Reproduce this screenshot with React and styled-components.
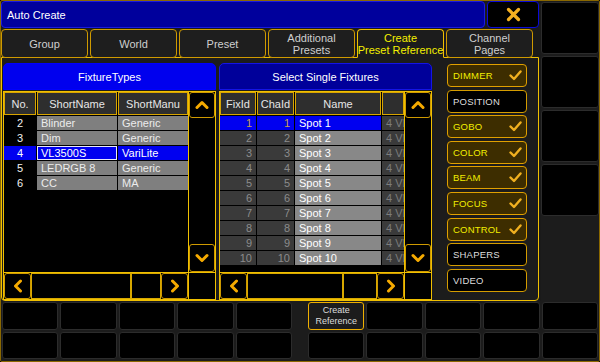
import styled, { createGlobalStyle } from "styled-components";

const YELLOW = "#f0c000";
const GOLD = "#cf9a00";
const ARROW = "#f5aa00";

const GlobalStyle = createGlobalStyle`
  html, body { margin: 0; padding: 0; background: #000; }
  body { font-family: "Liberation Sans", Arial, sans-serif; }
  * { box-sizing: border-box; }
`;

const tabs = [
  { label: "Group" },
  { label: "World" },
  { label: "Preset" },
  { label: "Additional\nPresets" },
  { label: "Create\nPreset Reference", active: true },
  { label: "Channel\nPages" },
];

const fixtureTypes = [
  ["2", "Blinder", "Generic"],
  ["3", "Dim", "Generic"],
  ["4", "VL3500S", "VariLite", true],
  ["5", "LEDRGB 8", "Generic"],
  ["6", "CC", "MA"],
];

const spots = Array.from({ length: 10 }, (_, i) => [String(i + 1), `Spot ${i + 1}`, i === 0]);

const features = [
  ["DIMMER", true],
  ["POSITION", false],
  ["GOBO", true],
  ["COLOR", true],
  ["BEAM", true],
  ["FOCUS", true],
  ["CONTROL", true],
  ["SHAPERS", false],
  ["VIDEO", false],
];

// cell looks per kind
const tones = {
  number: { bg: "#000", fg: "#f2f2f2", align: "center" },
  gray: { bg: "#7f7f7f", fg: "#ececec", align: "left" },
  id: { bg: "#3a3a3a", fg: "#8c8c8c", align: "right" },
  name: { bg: "#888", fg: "#fff", align: "left" },
  extra: { bg: "#3a3a3a", fg: "#7c7c7c", align: "left" },
  selected: { bg: "#0000f0", fg: "#fff", align: "left" },
  selectedNumber: { bg: "#0000f0", fg: "#fff", align: "center" },
  selectedId: { bg: "#0000f0", fg: "#c9a24a", align: "right" },
};

const Chevron = ({ dir }) => {
  const paths = {
    up: "M2 7.5L7 2.5L12 7.5",
    down: "M2 2.5L7 7.5L12 2.5",
    left: "M7.5 2L2.5 7L7.5 12",
    right: "M2.5 2L7.5 7L2.5 12",
  };
  const wide = dir === "up" || dir === "down";
  return (
    <svg width={wide ? 14 : 10} height={wide ? 10 : 14} viewBox={wide ? "0 0 14 10" : "0 0 10 14"}>
      <path d={paths[dir]} stroke={ARROW} strokeWidth="3" fill="none" strokeLinecap="round" strokeLinejoin="round" />
    </svg>
  );
};

const CloseIcon = () => (
  <svg width="15" height="15" viewBox="0 0 15 15">
    <path d="M2.5 2.5L12.5 12.5M12.5 2.5L2.5 12.5" stroke="#f5b020" strokeWidth="3.2" strokeLinecap="round" />
  </svg>
);

const Check = () => (
  <svg width="13" height="11" viewBox="0 0 13 11">
    <path d="M1.5 5.5L5 9L11.5 1.5" stroke="#f0b020" strokeWidth="2.4" fill="none" strokeLinecap="round" strokeLinejoin="round" />
  </svg>
);

const DataTable = ({ title, titleBg, titleBorder, columns, heads, rows, track }) => (
  <Table>
    <TableTitle $bg={titleBg} $border={titleBorder}>{title}</TableTitle>
    <TableBody>
      <DataArea>
        <HeaderRow $cols={columns}>
          {heads.map((h, i) => (
            <HeadCell key={i}>{h}</HeadCell>
          ))}
        </HeaderRow>
        {rows.map((cells, r) => (
          <Row key={r} $cols={columns}>
            {cells.map((c, i) => (
              <Cell key={i} $tone={tones[c.tone]} $edit={c.edit}>
                {c.text}
              </Cell>
            ))}
          </Row>
        ))}
      </DataArea>
      <VScroll>
        <ScrollButton $h={26}>
          <Chevron dir="up" />
        </ScrollButton>
        <Track />
        <ScrollButton $h={28}>
          <Chevron dir="down" />
        </ScrollButton>
      </VScroll>
      <HScroll>
        <ScrollButton $w={27}>
          <Chevron dir="left" />
        </ScrollButton>
        <HSeg $grow />
        <HSeg style={{ width: track }} />
        <ScrollButton $w={27}>
          <Chevron dir="right" />
        </ScrollButton>
      </HScroll>
      <Corner />
    </TableBody>
  </Table>
);

export default function App() {
  const leftRows = fixtureTypes.map(([no, name, manu, sel]) => [
    { text: no, tone: sel ? "selectedNumber" : "number" },
    { text: name, tone: sel ? "selected" : "gray", edit: sel },
    { text: manu, tone: sel ? "selected" : "gray" },
  ]);
  const rightRows = spots.map(([id, name, sel]) => [
    { text: id, tone: sel ? "selectedId" : "id" },
    { text: id, tone: sel ? "selectedId" : "id" },
    { text: name, tone: sel ? "selected" : "name" },
    { text: "4 VL3500S", tone: "extra" },
  ]);

  return (
    <>
      <GlobalStyle />
      <Window>
        <Top>
          <Main>
            <TitleRow>
              <TitleBar>Auto Create</TitleBar>
              <CloseButton>
                <CloseIcon />
              </CloseButton>
            </TitleRow>
            <TabRow>
              {tabs.map((t) => (
                <Tab key={t.label} $active={t.active}>
                  {t.label}
                </Tab>
              ))}
            </TabRow>
            <Panel>
              <DataTable
                title="FixtureTypes"
                titleBg="#0000ee"
                titleBorder="#0000ff"
                columns="32px 80px 70px"
                heads={["No.", "ShortName", "ShortManu"]}
                rows={leftRows}
                track={30}
              />
              <DataTable
                title="Select Single Fixtures"
                titleBg="#00009a"
                titleBorder="#1414e6"
                columns="36px 37px 86px 22px"
                heads={["FixId", "ChaId", "Name", ""]}
                rows={rightRows}
                track={34}
              />
              <Features>
                {features.map(([label, on]) => (
                  <FeatureButton key={label} $on={on}>
                    {label}
                    {on && <Check />}
                  </FeatureButton>
                ))}
              </Features>
            </Panel>
          </Main>
          <SideColumn>
            {[0, 1, 2, 3].map((i) => (
              <SideCell key={i} />
            ))}
          </SideColumn>
        </Top>
        <BottomBar>
          <KeyGrid>
            {Array.from({ length: 10 }, (_, i) => (
              <Key key={i} />
            ))}
          </KeyGrid>
          <KeyGrid>
            <ActionKey>
              Create
              <br />
              Reference
            </ActionKey>
            {Array.from({ length: 9 }, (_, i) => (
              <Key key={i} />
            ))}
          </KeyGrid>
        </BottomBar>
      </Window>
    </>
  );
}

const Window = styled.div`
  width: 600px;
  height: 362px;
  border: 1px solid #8a6800;
  border-radius: 2px;
  background: #1a1a1a;
  display: flex;
  flex-direction: column;
  overflow: hidden;
`;

const Top = styled.div`
  display: flex;
  height: 300px;
`;

const Main = styled.div`
  width: 538px;
  display: flex;
  flex-direction: column;
`;

const TitleRow = styled.div`
  display: flex;
  gap: 2px;
  height: 27px;
`;

const TitleBar = styled.div`
  flex: 1;
  background: #00009c;
  border: 1px solid #1a1ae0;
  border-radius: 4px;
  color: #fff;
  font-size: 11px;
  padding-left: 5px;
  display: flex;
  align-items: center;
`;

const CloseButton = styled.div`
  width: 52px;
  background: #000;
  border: 1px solid #0a0ad8;
  border-radius: 4px;
  display: flex;
  align-items: center;
  justify-content: center;
`;

const TabRow = styled.div`
  display: flex;
  gap: 2px;
  height: 30px;
  padding-top: 1px;
  margin-bottom: -1px;
  position: relative;
  z-index: 1;
`;

const Tab = styled.div`
  width: 87px;
  border: 1px solid ${(p) => (p.$active ? YELLOW : GOLD)};
  border-bottom-color: ${(p) => (p.$active ? "#1c1c1c" : GOLD)};
  border-radius: ${(p) => (p.$active ? "4px 4px 0 0" : "4px")};
  background: ${(p) => (p.$active ? "#1c1c1c" : "#1e1e1e")};
  color: ${(p) => (p.$active ? "#f4f000" : "#cfcfcf")};
  font-size: 11px;
  line-height: 12px;
  white-space: pre;
  text-align: center;
  display: flex;
  align-items: center;
  justify-content: center;
  padding-top: 1px;
`;

const Panel = styled.div`
  flex: 1;
  display: flex;
  align-items: stretch;
  border: 1px solid ${YELLOW};
  border-radius: 0 0 4px 4px;
  background: #1c1c1c;
  padding: 5px 0 0 1px;
  gap: 3px;
`;

const Table = styled.div`
  width: 213px;
  display: flex;
  flex-direction: column;
  gap: 1px;
`;

const TableTitle = styled.div`
  height: 27px;
  flex-shrink: 0;
  background: ${(p) => p.$bg};
  border: 1px solid ${(p) => p.$border};
  border-radius: 5px 5px 0 0;
  color: #fff;
  font-size: 11px;
  display: flex;
  align-items: center;
  justify-content: center;
`;

const TableBody = styled.div`
  height: 209px;
  border: 1px solid ${YELLOW};
  background: #000;
  display: grid;
  grid-template-columns: 1fr 27px;
  grid-template-rows: 1fr 27px;
`;

const DataArea = styled.div`
  overflow: hidden;
  display: flex;
  flex-direction: column;
  gap: 1px;
`;

const HeaderRow = styled.div`
  display: grid;
  grid-template-columns: ${(p) => p.$cols};
  column-gap: 1px;
  height: 23px;
  flex-shrink: 0;
`;

const HeadCell = styled.div`
  background: #2e2e2e;
  border: 1px solid #d8a400;
  color: #e6e6e6;
  font-size: 11px;
  display: flex;
  align-items: center;
  justify-content: center;
  white-space: nowrap;
  overflow: hidden;
`;

const Row = styled.div`
  display: grid;
  grid-template-columns: ${(p) => p.$cols};
  column-gap: 1px;
  height: 14px;
  flex-shrink: 0;
`;

const Cell = styled.div`
  background: ${(p) => p.$tone.bg};
  color: ${(p) => p.$tone.fg};
  text-align: ${(p) => p.$tone.align};
  box-shadow: ${(p) => (p.$edit ? "inset 0 0 0 1px #e8e8ff" : "none")};
  font-size: 11px;
  line-height: 14px;
  padding: 0 4px;
  white-space: nowrap;
  overflow: hidden;
`;

const VScroll = styled.div`
  display: flex;
  flex-direction: column;
  border-left: 1px solid ${YELLOW};
  background: #000;
`;

const ScrollButton = styled.div`
  ${(p) => (p.$h ? `height: ${p.$h}px;` : "")}
  ${(p) => (p.$w ? `width: ${p.$w}px;` : "")}
  flex-shrink: 0;
  border: 1px solid ${GOLD};
  border-radius: 3px;
  background: #000;
  display: flex;
  align-items: center;
  justify-content: center;
`;

const Track = styled.div`
  flex: 1;
`;

const HScroll = styled.div`
  display: flex;
  border-top: 1px solid ${YELLOW};
`;

const HSeg = styled.div`
  ${(p) => (p.$grow ? "flex: 1;" : "")}
  border: 1px solid #d8a800;
`;

const Corner = styled.div`
  border-top: 1px solid ${YELLOW};
  border-left: 1px solid ${YELLOW};
`;

const Features = styled.div`
  width: 80px;
  margin-left: 12px;
  padding-top: 1px;
  display: flex;
  flex-direction: column;
  gap: 2.6px;
`;

const FeatureButton = styled.div`
  height: 23px;
  border: 1px solid ${(p) => (p.$on ? "#e0a000" : "#d49c00")};
  border-radius: 4px;
  background: ${(p) => (p.$on ? "#3d2d00" : "#000")};
  color: ${(p) => (p.$on ? "#f2ee00" : "#dedede")};
  font-size: 9.5px;
  letter-spacing: 0.2px;
  padding: 0 4px 0 5px;
  display: flex;
  align-items: center;
  justify-content: space-between;
`;

const SideColumn = styled.div`
  width: 58px;
  margin-left: 2px;
  padding-top: 1px;
  display: flex;
  flex-direction: column;
  gap: 2px;
  background: #1c1c1c;
`;

const SideCell = styled.div`
  height: 52px;
  background: #000;
  border: 1px solid #2c2c2c;
  border-radius: 3px;
`;

const BottomBar = styled.div`
  flex: 1;
  display: flex;
  gap: 16px;
  padding: 1px 1px 2px;
  background: #1c1c1c;
`;

const KeyGrid = styled.div`
  flex: 1;
  display: grid;
  grid-template-columns: repeat(5, 1fr);
  grid-template-rows: 1fr 1fr;
  gap: 2px;
`;

const Key = styled.div`
  background: #000;
  border: 1px solid #2c2c2c;
  border-radius: 3px;
`;

const ActionKey = styled.div`
  background: #1c1c1c;
  border: 1px solid #f0b000;
  border-radius: 3px;
  color: #dcdcdc;
  font-size: 9px;
  line-height: 11px;
  text-align: center;
  display: flex;
  align-items: center;
  justify-content: center;
`;
